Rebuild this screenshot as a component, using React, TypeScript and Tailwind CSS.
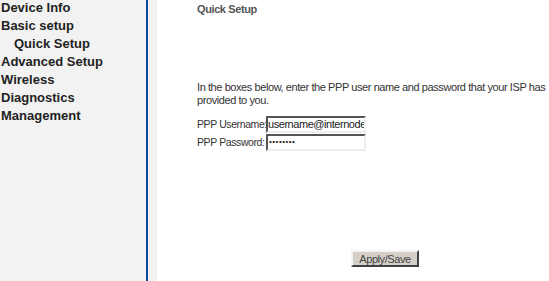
export default function App() {
  const items: [string, boolean][] = [
    ["Device Info", false],
    ["Basic setup", false],
    ["Quick Setup", true],
    ["Advanced Setup", false],
    ["Wireless", false],
    ["Diagnostics", false],
    ["Management", false],
  ];
  const font = { fontFamily: "Tahoma, 'Liberation Sans', Arial, sans-serif" };
  return (
    <div className="flex w-[549px] h-[281px] overflow-hidden bg-white" style={font}>
      <div className="w-[146px] shrink-0 bg-[#f2f2f2]">
        {items.map(([t, sub]) => (
          <div key={t} className={`h-[18px] leading-[15px] text-[13px] font-bold text-[#222] whitespace-nowrap ${sub ? "pl-[14px]" : "pl-[1px]"}`}>
            {t}
          </div>
        ))}
      </div>
      <div className="w-[2px] shrink-0 bg-[#0a4da0]" />
      <div className="w-[9px] shrink-0 bg-[#f2f2f2]" />
      <div className="flex-1 min-w-0 pl-[40px] text-[11px] text-[#333] tracking-[-0.42px]">
        <div className="pt-[3px] font-bold text-[#555] leading-[13px] tracking-[-0.4px]">Quick Setup</div>
        <div className="mt-[65px] leading-[13px] whitespace-nowrap">
          In the boxes below, enter the PPP user name and password that your ISP has
          <br />
          provided to you.
        </div>
        <div className="mt-[9px] flex flex-col gap-[1px]">
          <div className="flex items-center">
            <span className="w-[69px] shrink-0 whitespace-nowrap text-[10.5px] tracking-[-0.4px]">PPP Username:</span>
            <div className="w-[100px] shrink-0 h-[17px] border-2 border-t-[#555] border-l-[#555] border-b-[#eee] border-r-[#eee] bg-white leading-[13px] px-[0px] text-[11px] tracking-[-0.45px] text-[#222] overflow-hidden whitespace-nowrap" style={{ borderStyle: "solid" }}>
              username@internode
            </div>
          </div>
          <div className="flex items-center">
            <span className="w-[69px] shrink-0 whitespace-nowrap text-[10.5px] tracking-[-0.4px]">PPP Password:</span>
            <div className="w-[100px] shrink-0 h-[17px] border-2 border-t-[#555] border-l-[#555] border-b-[#eee] border-r-[#eee] bg-white leading-[12px] px-[1px] text-[8px] tracking-[0.5px] text-[#222] overflow-hidden whitespace-nowrap" style={{ borderStyle: "solid" }}>
              ••••••••
            </div>
          </div>
        </div>
        <div className="mt-[99px] pl-[154px]">
          <button className="w-[68px] h-[17px] bg-[#d4d0c8] border-2 border-t-[#f4f4f4] border-l-[#f4f4f4] border-b-[#404040] border-r-[#404040] text-[11px] text-[#444] leading-[12px] p-0 whitespace-nowrap" style={{ borderStyle: "solid" }}>
            Apply/Save
          </button>
        </div>
      </div>
    </div>
  );
}
